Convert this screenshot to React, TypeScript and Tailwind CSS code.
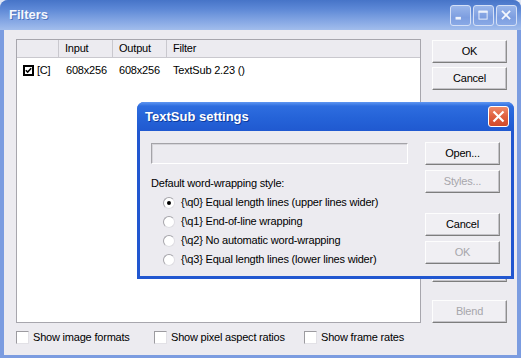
import type { ReactNode } from "react";

function Btn({
  children,
  disabled,
  className = "",
}: {
  children: ReactNode;
  disabled?: boolean;
  className?: string;
}) {
  return (
    <div
      className={`flex h-[23px] w-[75px] shrink-0 items-center justify-center border border-t-[#fdfdfd] border-l-[#fdfdfd] border-r-[#8f8f8f] border-b-[#7d7d7d] bg-[#f0eff3] shadow-[inset_-1px_-1px_0_#c4c3c8] ${
        disabled ? "text-[#a7a6ab]" : "text-black"
      } ${className}`}
    >
      {children}
    </div>
  );
}

function Check({ checked }: { checked?: boolean }) {
  if (checked) {
    return (
      <div className="flex h-[11px] w-[11px] items-center justify-center border-2 border-black bg-white">
        <svg width="9" height="9" viewBox="0 0 9 9">
          <path d="M1 4.2 L3.4 6.6 L8 1.6" fill="none" stroke="#000" strokeWidth="2" />
        </svg>
      </div>
    );
  }
  return (
    <div className="h-[13px] w-[13px] shrink-0 border border-t-[#9c9ba0] border-l-[#9c9ba0] border-r-[#e2e1e6] border-b-[#e2e1e6] bg-white" />
  );
}

function Radio({ selected }: { selected?: boolean }) {
  return (
    <div className="flex h-[12px] w-[12px] items-center justify-center rounded-full border border-t-[#a5a4aa] border-l-[#a5a4aa] border-r-[#dedde2] border-b-[#dedde2] bg-white">
      {selected && <div className="h-[4px] w-[4px] rounded-full bg-black" />}
    </div>
  );
}

function CaptionButton({ kind }: { kind: "min" | "max" | "close" }) {
  return (
    <div className="flex h-[21px] w-[21px] items-center justify-center rounded-[3px] border border-[#d5e0f6] bg-[linear-gradient(180deg,#9ab6ea_0%,#7d9ee0_60%,#89a9e6_100%)]">
      <svg width="21" height="21" viewBox="0 0 21 21">
        {kind === "min" && <rect x="5" y="12" width="6" height="3" fill="#eef3fc" />}
        {kind === "max" && (
          <g fill="none" stroke="#eef3fc">
            <rect x="5.5" y="5.5" width="9" height="9" />
            <line x1="5" y1="6.5" x2="15" y2="6.5" strokeWidth="2" />
          </g>
        )}
        {kind === "close" && (
          <g stroke="#f4f7fd" strokeWidth="2">
            <line x1="5.5" y1="5.5" x2="14.5" y2="14.5" />
            <line x1="14.5" y1="5.5" x2="5.5" y2="14.5" />
          </g>
        )}
      </svg>
    </div>
  );
}

function TextSubDialog() {
  const styles = [
    "{\\q0} Equal length lines (upper lines wider)",
    "{\\q1} End-of-line wrapping",
    "{\\q2} No automatic word-wrapping",
    "{\\q3} Equal length lines (lower lines wider)",
  ];

  return (
    <div className="absolute left-[137px] top-[102px] flex h-[177px] w-[377px] flex-col overflow-hidden rounded-t-[7px] bg-[#2157d0]">
      <div className="flex h-[29px] shrink-0 items-center bg-[linear-gradient(180deg,#5f97f2_0%,#2e6ddf_14%,#2563d8_55%,#2059d0_100%)] pl-[8px] pr-[5px]">
        <span className="text-[13px] font-bold tracking-normal text-white [text-shadow:1px_1px_0_#0c3a9c]">
          TextSub settings
        </span>
        <div className="ml-auto flex h-[21px] w-[21px] items-center justify-center rounded-[3px] border border-white bg-[linear-gradient(180deg,#ee8a6a_0%,#e0603f_50%,#d04a2a_100%)]">
          <svg width="19" height="19" viewBox="0 0 19 19">
            <g stroke="#fff" strokeWidth="2.2">
              <line x1="4.5" y1="4.5" x2="14.5" y2="14.5" />
              <line x1="14.5" y1="4.5" x2="4.5" y2="14.5" />
            </g>
          </svg>
        </div>
      </div>
      <div className="mx-[3px] mb-[3px] flex flex-1 bg-[#ecebf0]">
        <div className="flex w-[285px] flex-col pl-[11px] pt-[12px]">
          <div className="h-[21px] w-[257px] border border-t-[#a4a3a8] border-l-[#a4a3a8] border-r-white border-b-white bg-[#ecebf0] shadow-[inset_1px_1px_0_#d6d5da]" />
          <div className="mt-[13px] leading-[13px]">Default word-wrapping style:</div>
          <div className="mt-[3px] flex flex-col pl-[12px]">
            {styles.map((label, i) => (
              <div key={label} className="flex h-[19px] items-center gap-[6px]">
                <Radio selected={i === 0} />
                <span>{label}</span>
              </div>
            ))}
          </div>
        </div>
        <div className="flex flex-col pt-[11px]">
          <Btn>Open...</Btn>
          <Btn disabled className="mt-[5px]">
            Styles...
          </Btn>
          <Btn className="mt-[20px]">Cancel</Btn>
          <Btn disabled className="mt-[5px]">
            OK
          </Btn>
        </div>
      </div>
    </div>
  );
}

export default function App() {
  return (
    <div className="relative h-[358px] w-[521px] overflow-hidden bg-[#dfe6f5] font-['Liberation_Sans',Arial,sans-serif] text-[11px] tracking-[-0.2px] text-black">
      <div className="flex h-full flex-col overflow-hidden rounded-t-[8px] bg-[#7b9ce0]">
        <div className="flex h-[30px] shrink-0 items-center bg-[linear-gradient(180deg,#4674c8_0%,#5d88d6_30%,#85a7e4_70%,#a2bdec_100%)] pl-[9px] pr-[4px]">
          <span className="text-[13px] font-bold tracking-normal text-[#f4f7fd] [text-shadow:1px_1px_0_#4d74bf]">
            Filters
          </span>
          <div className="ml-auto flex gap-[2px]">
            <CaptionButton kind="min" />
            <CaptionButton kind="max" />
            <CaptionButton kind="close" />
          </div>
        </div>

        <div className="mx-[4px] mb-[3px] flex flex-1 bg-[#ecebf0] pl-[12px] pt-[9px]">
          <div className="flex w-[405px] flex-col">
            <div className="h-[284px] border border-[#a7a6ad] bg-white">
              <div className="flex h-[18px] border-b border-[#c9c8ce] bg-[#ecebf0]">
                <div className="w-[42px] border-r border-[#c9c8ce]" />
                <div className="flex w-[54px] items-center border-r border-[#c9c8ce] pl-[6px]">Input</div>
                <div className="flex w-[54px] items-center border-r border-[#c9c8ce] pl-[6px]">Output</div>
                <div className="flex flex-1 items-center pl-[6px]">Filter</div>
              </div>
              <div className="flex h-[24px] items-center">
                <div className="flex w-[42px] items-center pl-[6px]">
                  <Check checked />
                  <span className="ml-[3px]">[C]</span>
                </div>
                <div className="w-[54px] pl-[7px]">608x256</div>
                <div className="w-[54px] pl-[6px]">608x256</div>
                <div className="pl-[6px]">TextSub 2.23 ()</div>
              </div>
            </div>
            <div className="mt-[8px] flex h-[13px] items-center">
              <div className="flex w-[138px] items-center gap-[4px]">
                <Check />
                <span>Show image formats</span>
              </div>
              <div className="flex w-[150px] items-center gap-[4px]">
                <Check />
                <span>Show pixel aspect ratios</span>
              </div>
              <div className="flex items-center gap-[4px]">
                <Check />
                <span>Show frame rates</span>
              </div>
            </div>
          </div>

          <div className="ml-[11px] flex w-[75px] flex-col pt-px">
            <Btn>OK</Btn>
            <Btn className="mt-[4px]">Cancel</Btn>
            <Btn className="mt-[169px]">Cropping...</Btn>
            <Btn disabled className="mt-[18px]">
              Blend
            </Btn>
          </div>
        </div>
      </div>

      <TextSubDialog />
    </div>
  );
}
